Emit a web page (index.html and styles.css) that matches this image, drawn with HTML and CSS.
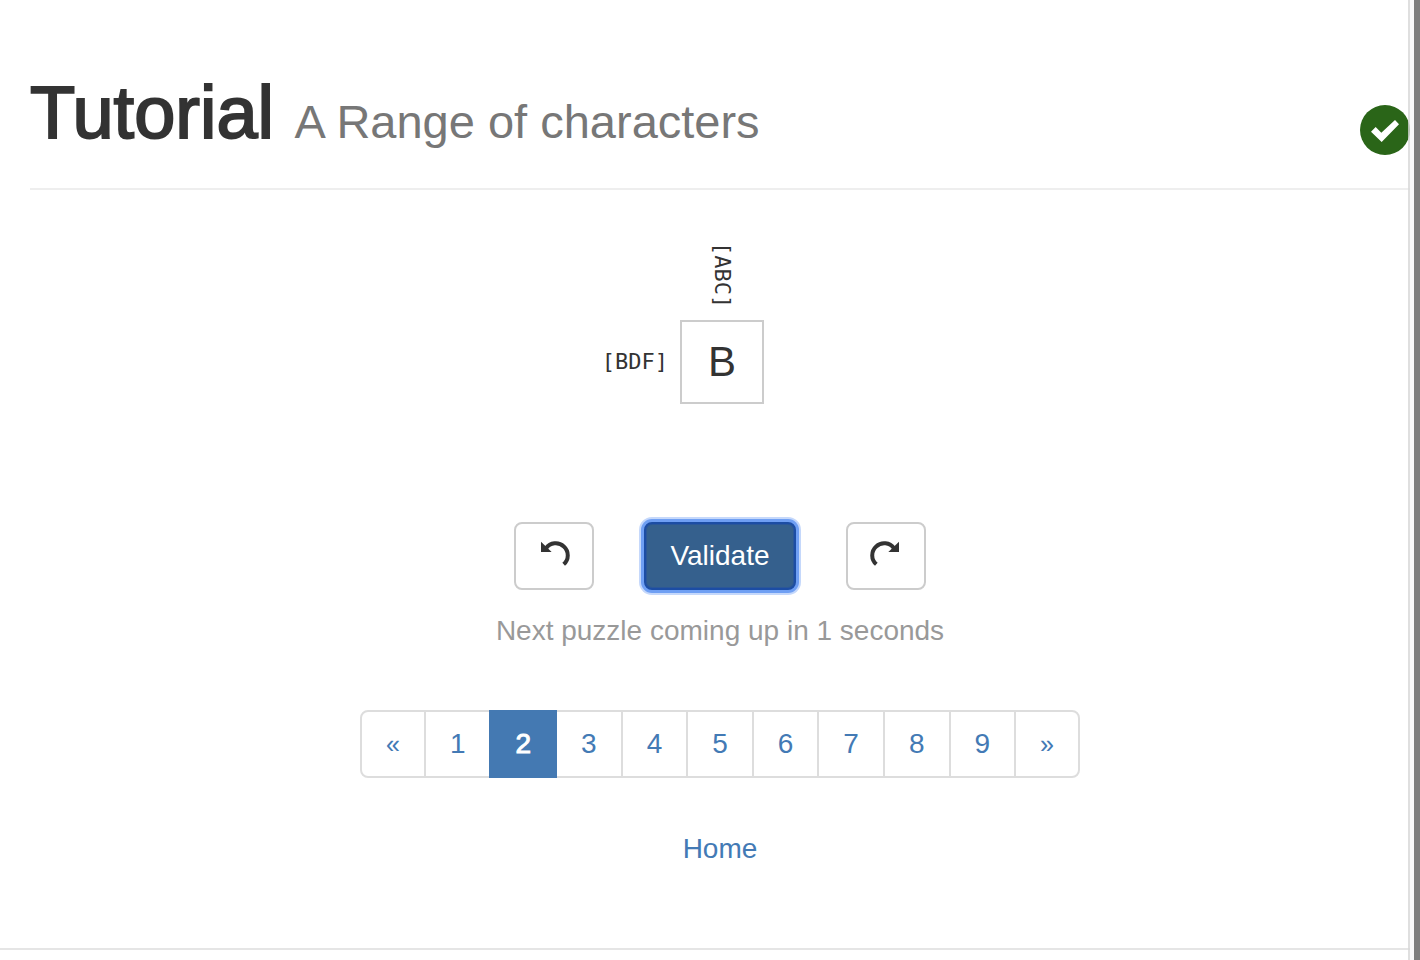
FILE: index.html
```html
<!DOCTYPE html>
<html lang="en">
<head>
<meta charset="utf-8">
<title>Tutorial - A Range of characters</title>
<link rel="stylesheet" href="styles.css">
</head>
<body>
<main class="page">
  <header class="page-header">
    <h1 class="title">Tutorial <small class="subtitle">A Range of characters</small></h1>
    <svg class="badge" viewBox="0 0 150 150" role="img" aria-label="Solved">
      <circle cx="75" cy="75" r="75" fill="#2a6518"/>
      <path d="M33 80 47 66 64 83 105 45 117 58 65 111Z" fill="#fff"/>
    </svg>
  </header>

  <section class="puzzle">
    <span class="clue clue-col">[ABC]</span>
    <span class="clue clue-row">[BDF]</span>
    <input class="cell" type="text" maxlength="1" value="B" aria-label="Answer">
  </section>

  <div class="actions">
    <button class="btn btn-icon" type="button" aria-label="Undo">
      <svg class="icon" viewBox="-3 0 90 96"><path d="M18 25A36 36 0 1 1 71 73" fill="none" stroke="#333" stroke-width="12"/><path d="M3 5V36H35Z" fill="#333"/></svg>
    </button>
    <button class="btn btn-primary" type="button">Validate</button>
    <button class="btn btn-icon" type="button" aria-label="Redo">
      <svg class="icon" viewBox="-3 0 90 96"><path d="M66 25A36 36 0 1 0 13 73" fill="none" stroke="#333" stroke-width="12"/><path d="M81 5V36H49Z" fill="#333"/></svg>
    </button>
  </div>
  <p class="message">Next puzzle coming up in 1 seconds</p>

  <nav aria-label="Puzzles">
    <ul class="pagination">
      <li><a class="page-link page-arrow" href="#">«</a></li>
      <li><a class="page-link" href="#">1</a></li>
      <li><a class="page-link active" href="#" aria-current="page">2</a></li>
      <li><a class="page-link" href="#">3</a></li>
      <li><a class="page-link" href="#">4</a></li>
      <li><a class="page-link" href="#">5</a></li>
      <li><a class="page-link" href="#">6</a></li>
      <li><a class="page-link" href="#">7</a></li>
      <li><a class="page-link" href="#">8</a></li>
      <li><a class="page-link" href="#">9</a></li>
      <li><a class="page-link page-arrow" href="#">»</a></li>
    </ul>
  </nav>
  <a class="home" href="#">Home</a>
</main>
<div class="footer-rule"></div>
<div class="scroll-edge"></div>
</body>
</html>
```
FILE: styles.css
```css
* { box-sizing: border-box; }

body {
  position: relative;
  margin: 0;
  min-height: 100vh;
  background: #fff;
  color: #333;
  font: 28px/40px "Liberation Sans", Arial, sans-serif;
}

.page {
  display: flex;
  flex-direction: column;
  align-items: center;
  padding: 73px 10px 79px 30px;
}

.page-header {
  display: flex;
  align-self: stretch;
  align-items: flex-end;
  justify-content: space-between;
  padding-bottom: 33px;
  border-bottom: 2px solid #eee;
}

.title {
  margin: 0 0 2px;
  font-size: 74px;
  font-weight: 400;
  line-height: 80px;
  -webkit-text-stroke: 2px #333;
}

.subtitle {
  color: #777;
  font-size: 47px;
  line-height: 1;
  -webkit-text-stroke: 0;
}

.badge { width: 50px; height: 50px; }

.puzzle {
  display: grid;
  grid-template-columns: 1fr 84px 1fr;
  align-items: center;
  gap: 12px;
  align-self: stretch;
  margin: 52px 0 0 4px;
}

.clue {
  font-family: "DejaVu Sans Mono", monospace;
  font-size: 22px;
  line-height: 32px;
}

.clue-col {
  grid-column: 2;
  justify-self: center;
  writing-mode: vertical-rl;
}

.clue-row {
  grid-row: 2;
  grid-column: 1;
  justify-self: end;
}

.cell {
  grid-row: 2;
  grid-column: 2;
  width: 84px;
  height: 84px;
  padding: 0;
  border: 2px solid #ccc;
  background: #fff;
  color: #333;
  font: 42px "Liberation Sans", Arial, sans-serif;
  text-align: center;
}

.actions {
  display: flex;
  gap: 50px;
  margin-top: 118px;
}

.btn {
  display: flex;
  align-items: center;
  justify-content: center;
  height: 68px;
  padding: 0 24px;
  border: 2px solid #ccc;
  border-radius: 8px;
  background: #fff;
  color: #333;
  font: inherit;
}

.btn-icon { width: 80px; }

.icon {
  flex: none;
  width: 30px;
  height: 32px;
  overflow: visible;
}

.btn-primary {
  width: 152px;
  border-color: #1c4da4;
  background: #35608d;
  color: #fff;
  box-shadow: inset 0 0 0 1px #2b5799, 0 0 0 3px #6f9ff3, 0 0 0 5px #c5d8fb;
}

.message {
  margin: 21px 0 0;
  color: #999;
}

.pagination {
  display: flex;
  margin: 59px 0 0;
  padding: 0;
  list-style: none;
}

.page-link {
  display: block;
  height: 68px;
  margin-left: -2px;
  padding: 12px 24px;
  border: 2px solid #ddd;
  color: #437ab5;
  text-decoration: none;
}

.page-arrow { font-size: 25px; }

.pagination li:first-child .page-link {
  margin-left: 0;
  border-radius: 8px 0 0 8px;
}

.pagination li:last-child .page-link { border-radius: 0 8px 8px 0; }

.page-link.active {
  position: relative;
  border-color: #4479b2;
  background: #4479b2;
  color: #fff;
  -webkit-text-stroke: 1px #fff;
}

.home {
  margin-top: 51px;
  color: #437ab5;
  text-decoration: none;
}

.footer-rule { border-top: 2px solid #e5e5e5; }

.scroll-edge {
  position: absolute;
  top: 0;
  right: 0;
  bottom: 0;
  width: 12px;
  border-left: 2px solid rgba(215, 215, 215, 0.8);
  border-right: 6px solid #7f7f7e;
  background: #fafafa;
  background-clip: padding-box;
}
```
